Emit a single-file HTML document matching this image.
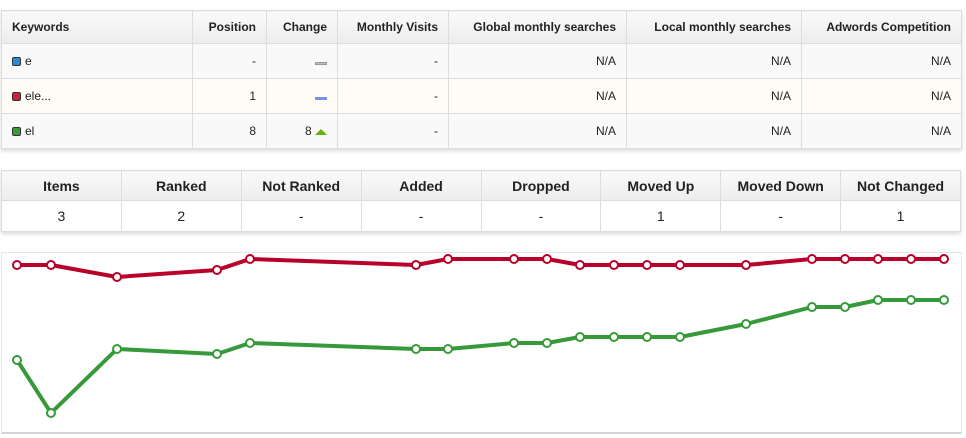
<!DOCTYPE html>
<html><head><style>
*{margin:0;padding:0;box-sizing:border-box}
body{width:966px;height:438px;background:#fff;font-family:"Liberation Sans",Arial,sans-serif;font-size:12px;color:#222;position:relative;overflow:hidden}
table{border-collapse:collapse;position:absolute;box-shadow:0 2px 4px rgba(0,0,0,.15)}
td,th{border:1px solid #ddd}
#t1{left:1px;top:10px;width:961px}
#t1 th{height:33px;background:linear-gradient(#fafafa,#ececec);font-weight:bold;text-align:right;padding:0 10px;color:#222}
#t1 td{height:35px;text-align:right;padding:0 10px;background:#f9f9f9}
#t1 tr.y td{background:#fffcf5}
#t1 th:first-child,#t1 td:first-child{text-align:left}
.sq{display:inline-block;width:9px;height:9px;border:1px solid #333;border-radius:2px;margin-right:4px;vertical-align:-1px}
#t2{left:1px;top:170px;width:960px;table-layout:fixed}
#t2 th{height:30px;background:linear-gradient(#fafafa,#ececec);font-size:14px;font-weight:bold;text-align:center}
#t2 td{height:31px;text-align:center;font-size:14px;background:#fff}
</style></head><body>
<table id="t1">
<tr><th style="width:191px">Keywords</th><th style="width:74px">Position</th><th style="width:71px">Change</th><th style="width:111px">Monthly Visits</th><th style="width:178px">Global monthly searches</th><th style="width:175px">Local monthly searches</th><th>Adwords Competition</th></tr>
<tr><td><span class="sq" style="background:#2a8ad8"></span>e</td><td>-</td><td><span style="display:inline-block;width:12px;height:3px;background:#bbb;border:1px solid #999"></span></td><td>-</td><td>N/A</td><td>N/A</td><td>N/A</td></tr>
<tr class="y"><td><span class="sq" style="background:#c8243c"></span>ele...</td><td>1</td><td><span style="display:inline-block;width:12px;height:3px;background:#7d90e8"></span></td><td>-</td><td>N/A</td><td>N/A</td><td>N/A</td></tr>
<tr><td><span class="sq" style="background:#3a9a3a"></span>el</td><td>8</td><td>8 <span style="display:inline-block;width:0;height:0;border-left:6px solid transparent;border-right:6px solid transparent;border-bottom:6px solid #6ab010"></span></td><td>-</td><td>N/A</td><td>N/A</td><td>N/A</td></tr>
</table>
<table id="t2">
<tr><th>Items</th><th>Ranked</th><th>Not Ranked</th><th>Added</th><th>Dropped</th><th>Moved Up</th><th>Moved Down</th><th>Not Changed</th></tr>
<tr><td>3</td><td>2</td><td>-</td><td>-</td><td>-</td><td>1</td><td>-</td><td>1</td></tr>
</table>
<div style="position:absolute;left:1px;top:252px;width:961px;height:182px;border:1px solid #e6e6e6;border-bottom:2px solid #d4d4d4"></div>
<svg style="position:absolute;left:0;top:0" width="966" height="438">
<polyline fill="none" stroke="#b8002a" stroke-width="4" stroke-linejoin="round" points="17,265 51,265 117,277 217,270 250,259 416,265 448,259 514,259 547,259 580,265 614,265 647,265 680,265 746,265 812,259 845,259 878,259 911,259 944,259"/>
<polyline fill="none" stroke="#379a3a" stroke-width="4" stroke-linejoin="round" points="17,360 51,413 117,349 217,354 250,343 416,349 448,349 514,343 547,343 580,337 614,337 647,337 680,337 746,324 812,307 845,307 878,300 911,300 944,300"/>
<g fill="#fff" stroke="#b8002a" stroke-width="2">
<circle cx="17" cy="265" r="4"/><circle cx="51" cy="265" r="4"/><circle cx="117" cy="277" r="4"/><circle cx="217" cy="270" r="4"/><circle cx="250" cy="259" r="4"/><circle cx="416" cy="265" r="4"/><circle cx="448" cy="259" r="4"/><circle cx="514" cy="259" r="4"/><circle cx="547" cy="259" r="4"/><circle cx="580" cy="265" r="4"/><circle cx="614" cy="265" r="4"/><circle cx="647" cy="265" r="4"/><circle cx="680" cy="265" r="4"/><circle cx="746" cy="265" r="4"/><circle cx="812" cy="259" r="4"/><circle cx="845" cy="259" r="4"/><circle cx="878" cy="259" r="4"/><circle cx="911" cy="259" r="4"/><circle cx="944" cy="259" r="4"/>
</g>
<g fill="#fff" stroke="#379a3a" stroke-width="2">
<circle cx="17" cy="360" r="4"/><circle cx="51" cy="413" r="4"/><circle cx="117" cy="349" r="4"/><circle cx="217" cy="354" r="4"/><circle cx="250" cy="343" r="4"/><circle cx="416" cy="349" r="4"/><circle cx="448" cy="349" r="4"/><circle cx="514" cy="343" r="4"/><circle cx="547" cy="343" r="4"/><circle cx="580" cy="337" r="4"/><circle cx="614" cy="337" r="4"/><circle cx="647" cy="337" r="4"/><circle cx="680" cy="337" r="4"/><circle cx="746" cy="324" r="4"/><circle cx="812" cy="307" r="4"/><circle cx="845" cy="307" r="4"/><circle cx="878" cy="300" r="4"/><circle cx="911" cy="300" r="4"/><circle cx="944" cy="300" r="4"/>
</g>
</svg>
</body></html>
